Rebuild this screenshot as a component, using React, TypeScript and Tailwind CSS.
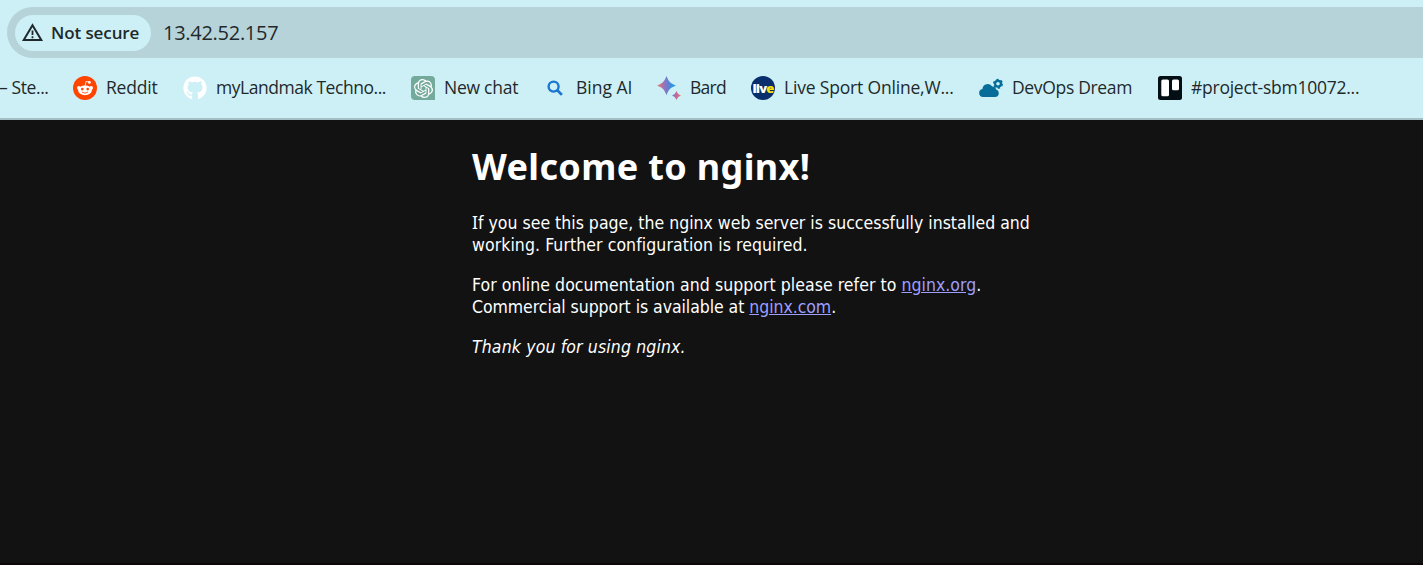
import type { ReactNode } from "react";
import { FaGithub } from "react-icons/fa6";
import { SiOpenai } from "react-icons/si";

function WarningIcon() {
  return (
    <svg viewBox="0 0 22 19" className="h-[19px] w-[22px] shrink-0" fill="none">
      <path d="M10.5 2.2 19.3 17H1.7Z" stroke="#1f292b" strokeWidth="2" />
      <path d="M10.5 7.5v4.5M10.5 13.2v2" stroke="#1f292b" strokeWidth="1.8" />
    </svg>
  );
}

function RedditIcon() {
  return (
    <svg viewBox="0 0 24 24" className="size-6">
      <circle cx="12" cy="12" r="12" fill="#ff4500" />
      <g fill="#fff">
        <circle cx="5.8" cy="11.9" r="1.8" />
        <circle cx="18.2" cy="11.9" r="1.8" />
        <ellipse cx="12" cy="14.3" rx="6.8" ry="4.9" />
        <circle cx="16.4" cy="6.4" r="1.4" />
      </g>
      <path d="m12 10 1.1-4.6 3.3.8" fill="none" stroke="#fff" strokeWidth="0.8" />
      <circle cx="9.3" cy="13.1" r="1.3" fill="#ff4500" />
      <circle cx="14.7" cy="13.1" r="1.3" fill="#ff4500" />
      <path d="M9.2 16.3q2.8 1.9 5.6 0" fill="none" stroke="#ff4500" strokeWidth="0.8" strokeLinecap="round" />
    </svg>
  );
}

function ChatIcon() {
  return (
    <span className="grid size-6 place-items-center rounded-[4px] rounded-br-none bg-[#74aa9c]">
      <SiOpenai className="size-[19px] text-white" />
    </span>
  );
}

function SearchIcon() {
  return (
    <svg viewBox="0 0 24 24" className="size-6" fill="none" stroke="#1a76d0">
      <circle cx="10.6" cy="10.6" r="5" strokeWidth="2.4" />
      <path d="m14.3 14.3 4.6 4.6" strokeWidth="2.7" />
    </svg>
  );
}

function BardIcon() {
  return (
    <svg viewBox="0 0 24 24" className="size-6">
      <defs>
        <linearGradient id="bard" x1="0" y1="0" x2="1" y2="0">
          <stop offset="0" stopColor="#f07a5c" />
          <stop offset="0.35" stopColor="#a170b8" />
          <stop offset="0.65" stopColor="#4f86d8" />
          <stop offset="1" stopColor="#12a5ee" />
        </linearGradient>
        <linearGradient id="bardSmall" x1="0" y1="0" x2="1" y2="0">
          <stop offset="0" stopColor="#5a83d6" />
          <stop offset="0.5" stopColor="#c9659b" />
          <stop offset="1" stopColor="#f27a54" />
        </linearGradient>
      </defs>
      <path d="M9.5 0C12 6 13 7 19 9.6 13 12.2 12 13.2 9.5 19.2 7 13.2 6 12.2 0 9.6 6 7 7 6 9.5 0Z" fill="url(#bard)" />
      <path d="M19.5 15C21 18 21 18 24 19.5 21 21 21 21 19.5 24 18 21 18 21 15 19.5 18 18 18 18 19.5 15Z" fill="url(#bardSmall)" />
    </svg>
  );
}

function LiveIcon() {
  return (
    <span className="flex size-6 items-center justify-center rounded-full bg-[#082e6b] font-['Open_Sans',sans-serif] text-[13px] leading-none font-extrabold tracking-[-0.8px] text-white">
      liv<span className="text-[#f8df10]">e</span>
    </span>
  );
}

function CloudGearIcon() {
  return (
    <svg viewBox="0 0 24 24" className="size-6" fill="#056d98">
      <path d="M4 21A4.1 4.1 0 0 1 3.4 12.9 5.4 5.4 0 0 1 13.3 10.6a4 4 0 0 1 3.9 3A3.8 3.8 0 0 1 16 21Z" />
      <circle cx="19" cy="7.8" r="2.9" fill="none" stroke="#056d98" strokeWidth="2.2" />
      <circle cx="19" cy="7.8" r="4.2" fill="none" stroke="#056d98" strokeWidth="1.6" strokeDasharray="2.3 2.1" />
    </svg>
  );
}

function BoardIcon() {
  return (
    <svg viewBox="0 0 24 24" className="size-6">
      <rect width="24" height="24" rx="2.5" fill="#030e15" />
      <rect x="3.3" y="3.5" width="7.7" height="16.8" rx="1.5" fill="#fff" />
      <rect x="14" y="3.5" width="7" height="10.8" rx="1.5" fill="#fff" />
    </svg>
  );
}

type Bookmark = { icon: ReactNode; label: string; size: string };

const bookmarks: Bookmark[] = [
  { icon: <RedditIcon />, label: "Reddit", size: "w-[52px] tracking-[-0.2px]" },
  { icon: <FaGithub className="size-6 text-white" />, label: "myLandmak Techno...", size: "w-[170px] tracking-[-0.45px]" },
  { icon: <ChatIcon />, label: "New chat", size: "w-[74px] tracking-[-0.25px]" },
  { icon: <SearchIcon />, label: "Bing AI", size: "w-[56px]" },
  { icon: <BardIcon />, label: "Bard", size: "w-[36px] tracking-[-0.75px]" },
  { icon: <LiveIcon />, label: "Live Sport Online,W...", size: "w-[170px] tracking-[-0.18px]" },
  { icon: <CloudGearIcon />, label: "DevOps Dream", size: "w-[121px] tracking-[-0.33px]" },
  { icon: <BoardIcon />, label: "#project-sbm10072...", size: "w-[170px] tracking-[-0.25px]" },
];

function AddressBar() {
  return (
    <div className="ml-[7px] flex h-[51px] shrink-0 items-center rounded-l-full bg-[#b6d3d9] pl-2">
      <div className="flex h-[36px] w-[136px] items-center gap-[7px] rounded-full bg-[#cdf0f6] pl-[7px]">
        <WarningIcon />
        <span className="text-[17px] font-semibold tracking-[-0.1px] whitespace-nowrap">Not secure</span>
      </div>
      <span className="ml-3 text-[20px] tracking-[-0.28px]">13.42.52.157</span>
    </div>
  );
}

function BookmarksBar() {
  return (
    <div className="flex h-[62px] shrink-0 items-center gap-[25px] overflow-hidden border-b-2 border-[#a3bec4] text-[17.5px] leading-6 whitespace-nowrap">
      <span className="mb-0.5 w-[48px] shrink-0 tracking-[-0.4px]">
        <span className="-ml-px">–</span> Ste...
      </span>
      {bookmarks.map((b) => (
        <div key={b.label} className="flex h-6 shrink-0 items-center gap-[9px]">
          {b.icon}
          <span className={`mb-0.5 ${b.size}`}>{b.label}</span>
        </div>
      ))}
    </div>
  );
}

function NginxPage() {
  return (
    <main className="flex-1 border-b-2 border-[#0b0708] bg-[#121212] pl-[472px] font-['DejaVu_Sans_Condensed','DejaVu_Sans',sans-serif] text-[17.5px] leading-[22px] whitespace-nowrap text-white">
      <h1 className="pt-[25px] font-['Noto_Sans',sans-serif] text-[36px] leading-[44px] font-bold tracking-[0.36px]">
        Welcome to nginx!
      </h1>
      <p className="mt-[23px]">
        <span className="tracking-[0.01px]">
          <span className="font-['Noto_Sans',sans-serif] leading-none">I</span>f you see this page, the nginx web
          server is successfully installed and
        </span>
        <br />
        <span className="tracking-[0.08px]">working. Further configuration is required.</span>
      </p>
      <p className="mt-[18px]">
        <span className="tracking-[0.05px]">
          For online documentation and support please refer to{" "}
          <a className="text-[#9e9eff] underline">nginx.org</a>.
        </span>
        <br />
        <span className="tracking-[-0.05px]">
          Commercial support is available at <a className="text-[#9e9eff] underline">nginx.com</a>.
        </span>
      </p>
      <p className="mt-[18px] tracking-[0.14px] italic">Thank you for using nginx.</p>
    </main>
  );
}

export default function App() {
  return (
    <div className="flex h-[565px] w-full flex-col overflow-hidden bg-[#cdf0f6] pt-[7px] font-['Open_Sans','Noto_Sans',sans-serif] text-[#1f292b]">
      <AddressBar />
      <BookmarksBar />
      <NginxPage />
    </div>
  );
}
